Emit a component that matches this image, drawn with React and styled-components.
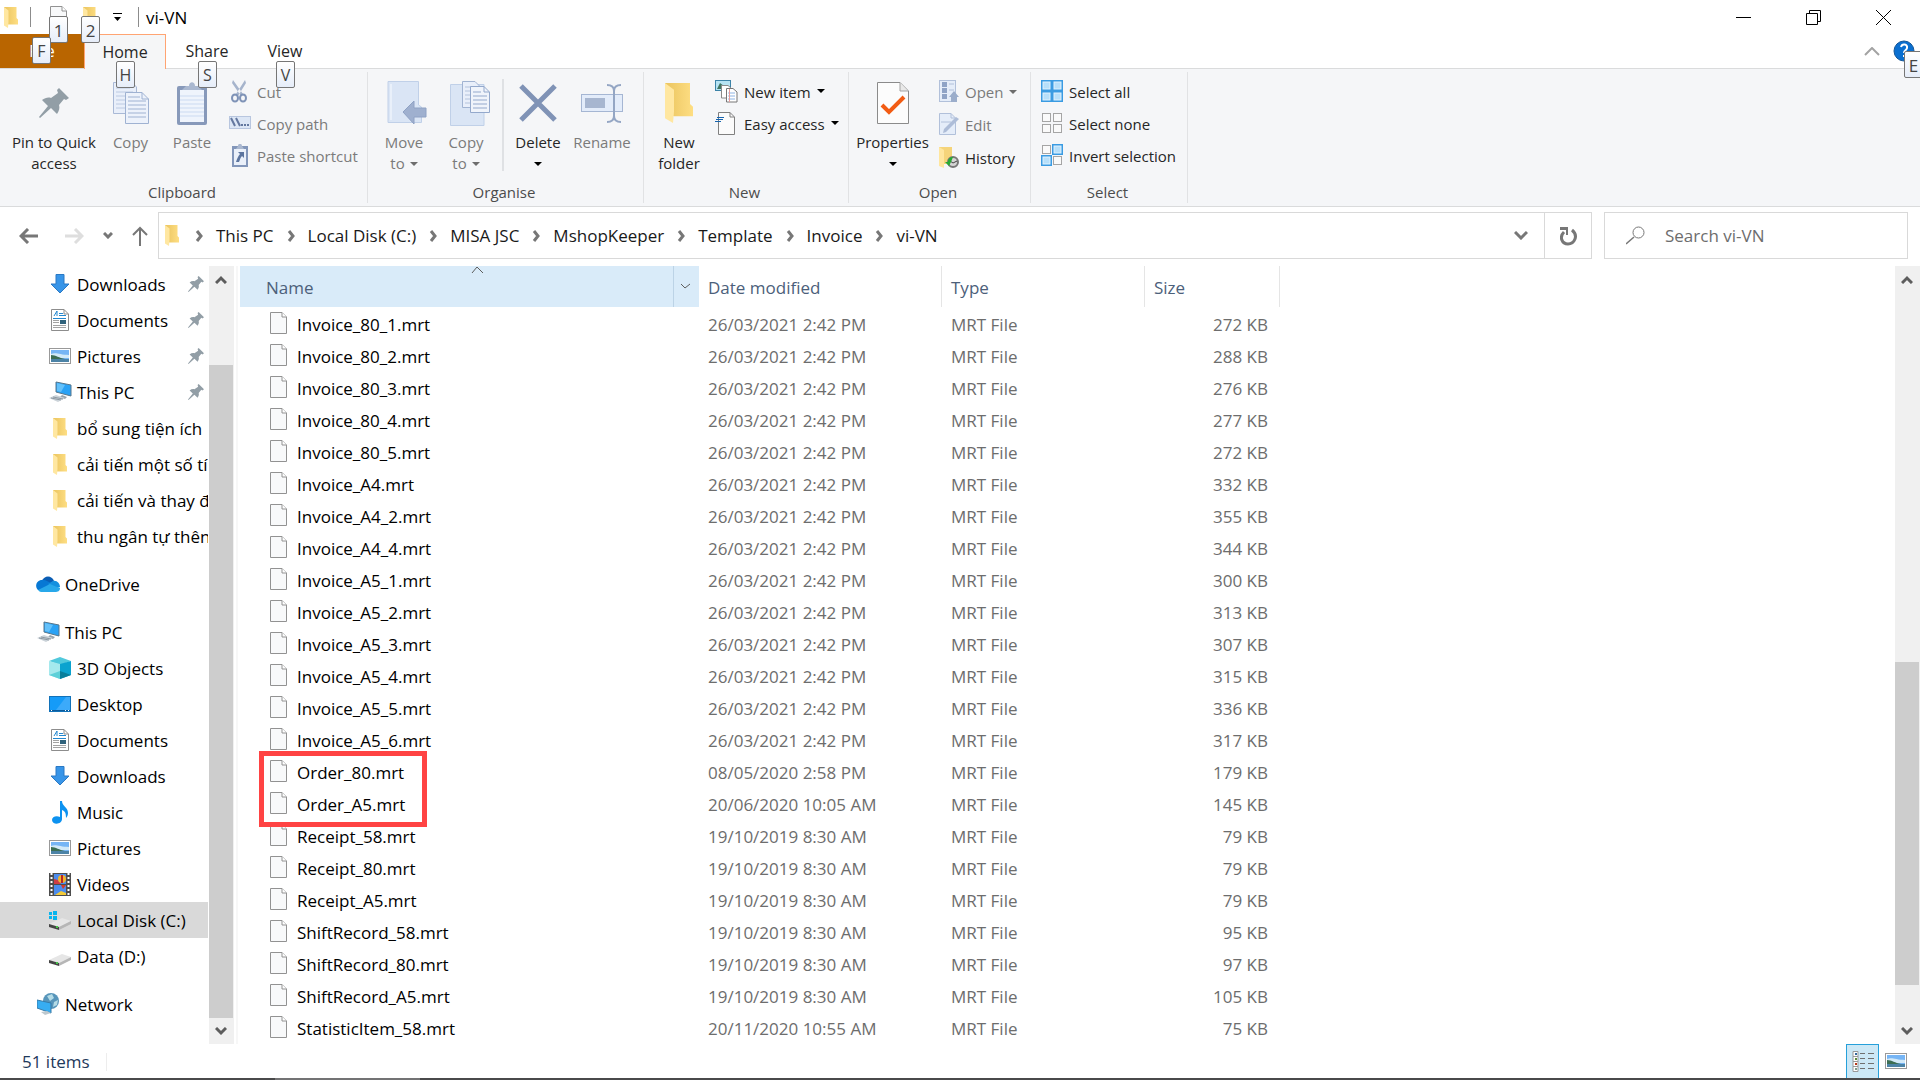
import React from "react";
import styled, { createGlobalStyle } from "styled-components";

const GlobalStyle = createGlobalStyle`
  * { box-sizing: border-box; }
  body {
    margin: 0;
    background: #fff;
    font-family: "Open Sans", "Noto Sans", sans-serif;
    font-size: 17px;
    line-height: 24px;
    color: #000;
  }
  button, input { font: inherit; color: inherit; }
  button { border: 0; padding: 0; background: none; }
  a { color: inherit; text-decoration: none; }
  svg { display: block; flex: none; }
`

const Window = styled.div`
  display: flex;
  flex-direction: column;
  min-height: 100vh;
  overflow: hidden;
`

const Label = styled.span`
  padding-top: 2px;
`

/* title bar */

const TitleBar = styled.header`
  display: flex;
  align-items: center;
  height: 34px;
  padding: 0 2px 0 4px;
`

const QuickButton = styled.button`
  position: relative;
  display: flex;
  justify-content: center;
  width: ${p => p.$width || 32}px;
`

const TitleLine = styled.span`
  width: 1px;
  height: 20px;
  margin: 0 ${p => p.$right}px 0 ${p => p.$left}px;
  background: #8c8c8c;
`

const Title = styled.h1`
  flex: 1;
  margin: 0;
  padding-top: 2px;
  font-size: 17px;
  font-weight: 400;
`

const WindowButton = styled.button`
  display: flex;
  align-items: center;
  justify-content: center;
  width: 70px;
  height: 34px;
`

const KeyTip = styled.span`
  position: absolute;
  z-index: 2;
  left: ${p => p.$left};
  top: ${p => p.$top}px;
  width: 19px;
  height: 27px;
  border: 1px solid #767676;
  border-radius: 2px;
  background: linear-gradient(#fff, #e6edf9);
  color: #444;
  line-height: 27px;
  text-align: center;
`

/* ribbon */

const Tabs = styled.nav`
  display: flex;
  height: 35px;
  border-bottom: 1px solid #dadbdc;
`

const Tab = styled.button`
  position: relative;
  width: ${p => p.$width}px;
  height: 34px;
  color: #262626;
  font-size: 16px;
`

const FileTab = styled(Tab)`
  background: #b96500;
  color: #fff;
`

const ActiveTab = styled(Tab)`
  height: 35px;
  border: 1px solid #ffa472;
  border-bottom: 0;
  background: #f5f6f7;
`

const TabTools = styled.div`
  display: flex;
  align-items: center;
  gap: 13px;
  margin-left: auto;
  padding-right: 5px;
`

const HelpButton = styled.button`
  position: relative;
`

const Ribbon = styled.section`
  display: flex;
  height: 138px;
  border-bottom: 1px solid #dadbdc;
  background: #f5f6f8;
  font-size: 15px;
  line-height: 21px;
`

const Group = styled.div`
  display: flex;
  flex-direction: column;
  width: ${p => p.$width}px;
  margin: 3px 0;
  border-right: 1px solid #e1e2e4;
`

const Tools = styled.div`
  display: flex;
  flex: 1;
  padding-left: ${p => p.$pad}px;
`

const GroupName = styled.div`
  padding-right: 3px;
  color: #4c4c4c;
  text-align: center;
`

const BigButton = styled.button`
  display: flex;
  flex-direction: column;
  align-items: center;
  width: ${p => p.$width}px;
  padding-top: 9px;
  color: ${p => p.disabled ? "#7b7b7b" : "#262626"};
  white-space: nowrap;

  & .picture {
    display: flex;
    align-items: center;
    height: 44px;
    margin-bottom: 7px;
  }
  & .line {
    display: flex;
    align-items: center;
    gap: 5px;
    height: 21px;
  }
`

const ToolLine = styled.span`
  width: 2px;
  height: 92px;
  margin: 7px 0 0 5px;
  background: #dfe1e4;
`

const SmallTools = styled.div`
  display: flex;
  flex-direction: column;
  margin-left: ${p => p.$left}px;
  padding-top: 3px;
`

const SmallButton = styled.button`
  display: flex;
  align-items: center;
  gap: 6px;
  height: ${p => p.$tall ? 33 : 32}px;
  color: ${p => p.disabled ? "#7b7b7b" : "#262626"};
  white-space: nowrap;
`

/* address row */

const AddressRow = styled.div`
  display: flex;
  align-items: center;
  height: 59px;
  padding: 0 12px 2px 19px;
`

const NavButtons = styled.div`
  display: flex;
  align-items: center;
  width: 139px;

  & button + button { margin-left: 19px; }
  & button:nth-child(2) { margin-left: 27px; }
`

const Address = styled.div`
  display: flex;
  align-items: center;
  flex: 1;
  height: 47px;
  border: 1px solid #d9d9d9;
`

const Crumbs = styled.nav`
  display: flex;
  align-items: center;
  flex: 1;
  padding-left: 6px;
  color: #191919;

  & > svg { margin-right: 3px; }
`

const Crumb = styled.a`
  display: flex;
  align-items: center;
  gap: 13px;
  margin-left: 13px;
`

const AddressButton = styled.button`
  display: flex;
  align-items: center;
  justify-content: center;
  width: 47px;
  height: 45px;
  border-left: ${p => p.$line ? "1px solid #d9d9d9" : "0"};
`

const Search = styled.label`
  display: flex;
  align-items: center;
  width: 304px;
  height: 47px;
  margin-left: 12px;
  padding-left: 21px;
  border: 1px solid #d9d9d9;

  & input {
    flex: 1;
    min-width: 0;
    padding: 0;
    margin-left: 20px;
    border: 0;
    outline: 0;
    background: none;
  }
  & input::placeholder { color: #6d6d6d; opacity: 1; }
`

/* body */

const Body = styled.main`
  display: flex;
  flex: 1;
`

const Side = styled.aside`
  width: 209px;
  padding-right: 1px;
`

const Place = styled.a`
  display: flex;
  align-items: center;
  gap: ${p => p.$root ? 5 : 6}px;
  height: 36px;
  margin-top: ${p => p.$root ? 12 : 0}px;
  padding-left: ${p => p.$root ? 36 : 49}px;
  background: ${p => p.$current ? "#d9d9d9" : "none"};
  white-space: nowrap;
  overflow: hidden;

  & .icon {
    display: flex;
    flex: none;
    justify-content: center;
    width: ${p => p.$root ? 24 : 22}px;
  }
  & .pin { margin-left: auto; margin-right: 4px; }
`

const ScrollTrack = styled.div`
  display: flex;
  flex-direction: column;
  flex: none;
  width: 25px;
  background: #f0f0f0;

  & button {
    display: flex;
    align-items: center;
    justify-content: center;
    height: 26px;
    padding-right: 1px;
  }
`

const Thumb = styled.div`
  flex: ${p => p.$size};
  width: 24px;
  background: #cdcdcd;
`

const Space = styled.div`
  flex: ${p => p.$size};
`

const Divider = styled.div`
  width: 2px;
  margin: 0 2px;
  background: #f7f7f7;
`

const Files = styled.div`
  flex: 1;
`

const FileTable = styled.table`
  width: 1040px;
  table-layout: fixed;
  border-collapse: separate;
  border-spacing: 0;

  & th {
    position: relative;
    height: 41px;
    padding: 3px 0 0 9px;
    border-right: 1px solid #e5e5e5;
    color: #4c607a;
    font-weight: 400;
    text-align: left;
  }
  & th:first-child {
    padding-left: 26px;
    border-right: 0;
    background: #d9ebf9;
  }
  & td {
    height: 32px;
    padding: 3px 0 0 9px;
    color: #6d6d6d;
    white-space: nowrap;
  }
  & td:first-child {
    position: relative;
    padding: 0 0 0 30px;
    color: #000;
  }
  & td:last-child {
    padding-right: 12px;
    text-align: right;
  }
`

const FileName = styled.a`
  display: flex;
  align-items: center;
  gap: 10px;
  height: 32px;

  & span { padding-top: 3px; }
`

const SortMark = styled.span`
  position: absolute;
  top: 0;
  left: 231px;
`

const FilterButton = styled.button`
  position: absolute;
  top: 0;
  right: 0;
  display: flex;
  align-items: center;
  justify-content: center;
  width: 26px;
  height: 41px;
  padding-right: 2px;
  border-left: 1px solid #bcd3e6;
`

const Highlight = styled.div`
  position: absolute;
  z-index: 1;
  top: -4px;
  left: 19px;
  width: 168px;
  height: 76px;
  border: 5px solid #ff4343;
  pointer-events: none;
`

const StatusBar = styled.footer`
  display: flex;
  align-items: center;
  height: 34px;
  padding: 0 8px 0 22px;
  color: #1e395b;

  & .count {
    margin-top: 2px;
    padding-right: 16px;
    border-right: 1px solid #ededed;
    line-height: 18px;
  }
`

const ViewButton = styled.button`
  display: flex;
  align-items: center;
  justify-content: center;
  width: 33px;
  height: 34px;
  border: ${p => p.$on ? "1px solid #26a0da" : "0"};
  border-bottom: 0;
  background: ${p => p.$on ? "#cce8f6" : "none"};

  &:first-of-type { margin-left: auto; }
`

const TaskEdge = styled.div`
  height: 2px;
  background: linear-gradient(90deg, #4a4a4b 0 275px, #737374 275px 420px, #4a4a4b 420px);
`

/* icons */

const Folder = ({ w = 14, h = 21 }) => (
  <svg width={w} height={h} viewBox="0 0 28 42" preserveAspectRatio="none">
    <defs>
      <linearGradient id="fold" x1="0" x2="1"><stop offset="0" stopColor="#eac45f" /><stop offset="1" stopColor="#fede83" /></linearGradient>
    </defs>
    <path d="M0 0H25V22L28 25V35H9L0 32z" fill="url(#fold)" />
    <path d="M0 0L9 7V30L8 42L0 37z" fill="#ffe7a1" />
  </svg>
)

const Page = () => (
  <svg width="17" height="22" viewBox="0 0 17 22">
    <path d="M.5.5H12L16.500 5V21.500H.5z" fill="#f8f9fa" stroke="#929292" />
    <path d="M12 .5V5H16.500" fill="#fff" stroke="#929292" />
  </svg>
)

const Caret = ({ color = "#000" }) => (
  <svg width="8" height="4" viewBox="0 0 8 4"><path d="M0 0H8L4 4z" fill={color} /></svg>
)

const Chevron = ({ d, w, h, color = "#5d5d5d", stroke = 3 }) => (
  <svg width={w} height={h} viewBox={`0 0 ${w} ${h}`}><path d={d} fill="none" stroke={color} strokeWidth={stroke} /></svg>
)

const Pin = ({ size = 16 }) => (
  <svg width={size} height={size} viewBox="0 0 30 30">
    <path d="M20 0L30 10L27 12L25 11L20 17C21 20 20 23 18 26L12 20L1 30L0 29L9 18L3 12C6 10 9 9 12 10L19 5L18 2z" fill="#929ea6" />
  </svg>
)

const Sheets = () => (
  <svg width="36" height="42" viewBox="0 0 36 42">
    <path d="M.5.5H19L23.500 5V31.500H.5z" fill="#e9effa" stroke="#a9b9d6" />
    <path d="M3 6H17M3 10H20M3 14H20M3 18H20M3 22H20M3 26H20" stroke="#bccae2" />
    <path d="M12.500 10.500H29L35.500 17V41.500H12.500z" fill="#edf2fb" stroke="#9fb2d2" />
    <path d="M29 10.500V17H35.500M15 15H27M15 19H33M15 23H33M15 27H33M15 31H33M15 35H33" fill="none" stroke="#9fb2d2" />
  </svg>
)

const Clipboard = () => (
  <svg width="30" height="43" viewBox="0 0 30 43">
    <rect y="4" width="30" height="39" rx="2" fill="#8799ba" />
    <rect x="3" y="8" width="24" height="32" fill="#eff4fc" />
    <path d="M3 14H27M3 18H27M3 22H27M3 26H27M3 30H27M3 34H27" stroke="#cbdaf1" />
    <path d="M5 8L9 4H12C12-1 18-1 18 4H21L25 8z" fill="#aab8d0" />
  </svg>
)

const Scissors = () => (
  <svg width="22" height="23" viewBox="0 0 22 23">
    <path d="M4 0L14 14L12 16L3 3zM16 0L7 14L9 16L17 3z" fill="#a6b4cc" />
    <ellipse cx="6" cy="18" rx="3" ry="3.500" fill="none" stroke="#7f93b7" strokeWidth="2" />
    <ellipse cx="14" cy="18" rx="3" ry="3.500" fill="none" stroke="#7f93b7" strokeWidth="2" />
  </svg>
)

const PathIcon = () => (
  <svg width="22" height="14" viewBox="0 0 22 14">
    <rect x=".5" y=".5" width="21" height="12" fill="#dce6f5" stroke="#b8c6df" />
    <path d="M2 2L6 10M7 2L11 10" stroke="#64789f" strokeWidth="2" />
    <path d="M12 9h2M15 9h2M18 9h2" stroke="#64789f" strokeWidth="2" />
  </svg>
)

const Shortcut = () => (
  <svg width="22" height="23" viewBox="0 0 22 23">
    <rect x="3" y="2" width="16" height="21" fill="#8296ba" />
    <rect x="5" y="5" width="12" height="16" fill="#eaf0fa" />
    <path d="M7 5L9 2C9-1 13-1 13 2L15 5z" fill="#aab8d0" />
    <path d="M9 8H15V14L13 12C11 14 11 16 10 18L7 18C8 15 9 12 11 10z" fill="#5c759f" />
  </svg>
)

const MoveTo = () => (
  <svg width="46" height="44" viewBox="-6 0 46 44">
    <path d="M1 .5H31.500V24L34.500 26V41.500H1z" fill="#dae5f5" stroke="#c0d0e8" />
    <path d="M4 3V39" stroke="#e9f0fa" strokeWidth="2" />
    <path d="M16 31L27 20V27H39V36H27V43z" fill="#9fb0cf" stroke="#8fa2c4" />
  </svg>
)

const CopyTo = () => (
  <svg width="47" height="45" viewBox="-7 0 47 45">
    <path d="M.5 3.500H34V44.500H.5z" fill="#dae5f5" stroke="#c0d0e8" />
    <path d="M12.500.5H25L30.500 6V26.500H12.500z" fill="#e9effa" stroke="#a2b4d2" />
    <path d="M15 6H24M15 10H27M15 14H27M15 18H27M15 22H27" stroke="#b4c3dc" />
    <path d="M20.500 5.500H34L39.500 11V31.500H20.500z" fill="#f0f4fb" stroke="#94a9cc" />
    <path d="M34 5.500V11H39M23 11H31M23 15H37M23 19H37M23 23H37M23 27H37" fill="none" stroke="#94a9cc" />
  </svg>
)

const DeleteIcon = () => (
  <svg width="38" height="38" viewBox="0 0 38 38"><path d="M2 2L36 36M36 2L2 36" stroke="#8093b6" strokeWidth="5" /></svg>
)

const RenameIcon = () => (
  <svg width="42" height="39" viewBox="0 0 42 39">
    <rect x=".5" y="10.500" width="41" height="17" fill="#e3ecfa" stroke="#a5b6d3" />
    <rect x="4" y="14" width="20" height="10" fill="#a7b6d0" />
    <path d="M26 1C31 1 33 3 33 7V32C33 36 31 38 26 38M40 1C35 1 33 3 33 7V32C33 36 35 38 40 38" fill="none" stroke="#94a6c4" strokeWidth="2" />
  </svg>
)

const NewItem = () => (
  <svg width="23" height="23" viewBox="0 0 23 23">
    <rect x=".5" y=".5" width="15" height="10" fill="#b6e3f3" stroke="#3c83a8" />
    <path d="M2 9L5 3L9 6L12 9z" fill="#3f7562" />
    <path d="M6.500 5.500H13L16 8V18H6.500z" fill="#fff" stroke="#8a8a8a" />
    <path d="M11.500 8.500H18L22 12V22H11.500z" fill="#fff" stroke="#777" />
    <path d="M13 13H20M13 16H20M13 19H20" stroke="#8eb4e4" />
    <path d="M14.500 9V22" stroke="#e79b9b" />
  </svg>
)

const EasyAccess = () => (
  <svg width="23" height="23" viewBox="0 0 23 23">
    <path d="M3.500.5H15L19.500 5V22.500H3.500z" fill="#fbfbfb" stroke="#808080" />
    <path d="M15 .5V5H19" fill="none" stroke="#808080" />
    <path d="M2 5.500H9M1 7.500H8M0 9.500H6" stroke="#1764ae" />
  </svg>
)

const PropsIcon = () => (
  <svg width="32" height="42" viewBox="0 0 32 42">
    <path d="M.5.5H23L31.500 9V41.500H.5z" fill="#fcfcfc" stroke="#8b8b8b" />
    <path d="M23 .5V9H31" fill="#e9e9e9" stroke="#a3a3a3" />
    <path d="M5 23L12 30L27 15" fill="none" stroke="#f25c14" strokeWidth="4" />
  </svg>
)

const OpenIcon = () => (
  <svg width="20" height="23" viewBox="0 0 20 23">
    <rect x=".5" y=".5" width="16" height="21" fill="#e5edf9" stroke="#b1c0da" />
    <path d="M3 2h5v5h-5zM3 8h5v5h-5zM3 14h5v5h-5z" fill="#8fa3c6" />
    <path d="M10 4H15M10 10H15" stroke="#b1c0da" />
    <path d="M15 11L20 17H18V22H12V17H10z" fill="#9badcb" />
  </svg>
)

const EditIcon = () => (
  <svg width="20" height="23" viewBox="0 0 20 23">
    <path d="M.5.5H12L16.500 5V21.500H.5z" fill="#e5edf9" stroke="#b1c0da" />
    <path d="M12 .5V5H16M2 9H12" fill="none" stroke="#b1c0da" />
    <path d="M4 20L5 16L17 4L20 6L7 19z" fill="#aebdd8" />
  </svg>
)

const HistoryIcon = () => (
  <svg width="20" height="23" viewBox="0 0 20 23">
    <path d="M0 1H13V12L14 18H0z" fill="#f5d47a" />
    <path d="M0 1L5 4V22L0 20z" fill="#ffe69e" />
    <circle cx="14" cy="16" r="5" fill="#d5d5d5" stroke="#777" strokeWidth="2" />
    <path d="M11 15l3 2l4-2" fill="none" stroke="#444" />
    <path d="M14 11C11 11 9 13 9 16H6L10 20L12 16" fill="#28a935" />
  </svg>
)

/* four squares, each one either picked or plain */
const Squares = ({ on }) => (
  <svg width="22" height="22" viewBox="0 0 22 22">
    {[[0, 0], [11, 0], [0, 11], [11, 11]].map(([x, y], i) => on[i] ? (
      <g key={i}>
        <rect x={x + 1} y={y + 1} width="9" height="9" fill="#b6dffa" stroke="#3a9be2" strokeWidth="2" />
        <rect x={x + 2} y={y + 2} width="7" height="7" fill="none" stroke="#dff1fd" strokeWidth="1" />
      </g>
    ) : (
      <rect key={i} x={x + 1.5} y={y + 1.5} width="8" height="8" fill="#fafafa" stroke="#a5a5a5" />
    ))}
  </svg>
)

const Down = () => (
  <svg width="20" height="20" viewBox="0 0 20 20"><path d="M6 .5H14V10H19L10 19L1 10H6z" fill="#3895e8" stroke="#2a79c4" /></svg>
)

const Doc = () => (
  <svg width="18" height="22" viewBox="0 0 18 22">
    <path d="M.5.5H13L17.500 5V21.500H.5z" fill="#fff" stroke="#8d8d8d" />
    <path d="M13 .5V5H17" fill="none" stroke="#8d8d8d" />
    <path d="M3 7L6 2V7M8 4.500H12M8 6.500H15M2 9.500H15" fill="none" stroke="#2287cf" />
    <path d="M2 11.500H8M2 13.500H8M2 16.500H15M2 18.500H15" stroke="#a3a3a3" />
    <rect x="9" y="11" width="6" height="4" fill="#31637c" />
  </svg>
)

const Photo = () => (
  <svg width="22" height="16" viewBox="0 0 22 16">
    <rect x=".5" y=".5" width="21" height="15" fill="#fff" stroke="#999" />
    <rect x="2" y="2" width="18" height="12" fill="#76b5f5" />
    <path d="M2 6C7 4 11 7 20 7V10H2z" fill="#d2e9f8" />
    <path d="M2 7C7 7 10 10 16 11H2z" fill="#3c6e54" />
    <path d="M2 11H20V14H2z" fill="#4c83a6" />
  </svg>
)

const Computer = () => (
  <svg width="23" height="22" viewBox="0 0 23 22">
    <path d="M7 1L22 4V15L7 11z" fill="#2aa2f5" stroke="#58778b" />
    <path d="M8 2L16 4L12 11L8 10z" fill="#64c1fa" />
    <path d="M13 14L18 16L16 18L10 17z" fill="#98a3aa" />
    <path d="M0 17L7 14L16 17L9 21z" fill="#cbd3d9" />
    <path d="M2 17L12 19M4 16L14 18" stroke="#8e9aa3" />
  </svg>
)

const Cloud = () => (
  <svg width="24" height="16" viewBox="0 0 24 16">
    <path d="M6 5C8-1 16-1 18 5L12 9z" fill="#0a5db4" />
    <path d="M2 14C-2 10 1 4 6 4C9 3 12 6 17 8L10 14z" fill="#0778d4" />
    <path d="M17 5C21 4 24 8 24 11L18 13L12 8z" fill="#1490df" />
    <path d="M2 14L14 8C18 10 22 11 24 12C24 15 22 16 19 16H5C4 16 3 15 2 14z" fill="#28a8ea" />
  </svg>
)

const Cube = () => (
  <svg width="22" height="22" viewBox="0 0 22 22">
    <path d="M0 4L11 0L22 4L11 8z" fill="#51c9dc" />
    <path d="M0 4L11 7V22L0 18z" fill="#a5e9ed" />
    <path d="M11 7L22 4V18L11 22z" fill="#0ba3cf" />
    <path d="M0 18L11 14V22z" fill="#5ed0d8" />
    <path d="M11 14L22 18L11 22z" fill="#087e9b" />
  </svg>
)

const DesktopIcon = () => (
  <svg width="22" height="16" viewBox="0 0 22 16">
    <rect x=".5" y=".5" width="21" height="15" fill="#159bf8" stroke="#1272b9" />
    <path d="M7 14L17 1H21V14z" fill="#3caafa" />
    <path d="M1 14.500H21" stroke="#0b5b9c" />
    <path d="M2 14.500h1M16 14.500h1M19 14.500h1" stroke="#fff" />
  </svg>
)

const Note = () => (
  <svg width="17" height="23" viewBox="0 0 17 23">
    <path d="M8 0H10C10 5 16 6 16 12C16 14 15 16 14 17C14 12 13 10 10 9V18C10 24 0 24 0 19C0 16 4 14 8 16z" fill="#0d92f0" />
  </svg>
)

const Film = () => (
  <svg width="22" height="23" viewBox="0 0 22 23">
    <rect width="22" height="23" fill="#4d4d4d" />
    <path d="M2.500 0V23M19.500 0V23" stroke="#fff" strokeWidth="2" strokeDasharray="2 2" />
    <path d="M5 1H17V11H5zM5 12H17V22H5z" fill="#4c8ced" />
    <path d="M5 6L9 7L12 11H5z" fill="#cf3d44" />
    <circle cx="13" cy="6" r="4" fill="#f3b32a" />
    <path d="M13 2V10" stroke="#b72626" strokeWidth="2" />
    <path d="M12 12H17L14 16z" fill="#d43a27" />
    <path d="M6 22L12 18L17 20V22z" fill="#f3ca38" />
  </svg>
)

const Drive = ({ system }) => (
  <svg width="22" height="20" viewBox="0 0 22 20">
    <path d="M0 14L13 8L22 11L10 17z" fill="#e6e6e6" />
    <path d="M0 14L10 17V20L0 17z" fill="#454545" />
    <path d="M10 17L22 11V14L10 20z" fill="#b6b6b6" />
    <path d="M7 17h2" stroke="#47c34b" strokeWidth="2" />
    {system && <path d="M0 2H3V5H0zM4 1H8V5H4zM0 6H3V9H0zM4 6H8V10H4z" fill="#08b5ee" />}
  </svg>
)

const NetworkIcon = () => (
  <svg width="22" height="22" viewBox="0 0 22 22">
    <circle cx="14" cy="8" r="8" fill="#5795ba" />
    <path d="M10 3L15 1L17 5L13 8zM17 9L21 7L20 12L16 14z" fill="#b4dbe6" />
    <path d="M0 7L14 10V20L0 15z" fill="#37adf2" stroke="#367ba8" />
    <path d="M4 19L10 18L14 20L8 22z" fill="#bdc8ce" />
  </svg>
)

const DetailsIcon = () => (
  <svg width="22" height="22" viewBox="0 0 22 22">
    <path d="M1 .5h5v5h-5zM1 5.500h5v5h-5zM1 10.500h5v5h-5zM1 15.500h5v5h-5z" fill="#fff" stroke="#999" />
    <path d="M3 3h2" stroke="#34689d" strokeWidth="2" />
    <path d="M3 8h2" stroke="#5f8c3c" strokeWidth="2" />
    <path d="M3 13h2" stroke="#b53719" strokeWidth="2" />
    <path d="M3 18h2" stroke="#7c9c8c" strokeWidth="2" />
    <path d="M8 2.500h5M16 2.500h6M8 7.500h5M16 7.500h6M8 12.500h5M16 12.500h6M8 17.500h5M16 17.500h6" stroke="#707070" />
  </svg>
)

/* data */

const pinned = [
  ["Downloads", Down], ["Documents", Doc], ["Pictures", Photo], ["This PC", Computer],
]
const recent = ["bổ sung tiện ích", "cải tiến một số tí", "cải tiến và thay đ", "thu ngân tự thên"]
const computer = [
  ["3D Objects", Cube], ["Desktop", DesktopIcon], ["Documents", Doc], ["Downloads", Down],
  ["Music", Note], ["Pictures", Photo], ["Videos", Film],
]
const crumbs = ["This PC", "Local Disk (C:)", "MISA JSC", "MshopKeeper", "Template", "Invoice", "vi-VN"]

const march = "26/03/2021 2:42 PM"
const october = "19/10/2019 8:30 AM"
const files = [
  ["Invoice_80_1.mrt", march, 272],
  ["Invoice_80_2.mrt", march, 288],
  ["Invoice_80_3.mrt", march, 276],
  ["Invoice_80_4.mrt", march, 277],
  ["Invoice_80_5.mrt", march, 272],
  ["Invoice_A4.mrt", march, 332],
  ["Invoice_A4_2.mrt", march, 355],
  ["Invoice_A4_4.mrt", march, 344],
  ["Invoice_A5_1.mrt", march, 300],
  ["Invoice_A5_2.mrt", march, 313],
  ["Invoice_A5_3.mrt", march, 307],
  ["Invoice_A5_4.mrt", march, 315],
  ["Invoice_A5_5.mrt", march, 336],
  ["Invoice_A5_6.mrt", march, 317],
  ["Order_80.mrt", "08/05/2020 2:58 PM", 179],
  ["Order_A5.mrt", "20/06/2020 10:05 AM", 145],
  ["Receipt_58.mrt", october, 79],
  ["Receipt_80.mrt", october, 79],
  ["Receipt_A5.mrt", october, 79],
  ["ShiftRecord_58.mrt", october, 95],
  ["ShiftRecord_80.mrt", october, 97],
  ["ShiftRecord_A5.mrt", october, 105],
  ["StatisticItem_58.mrt", "20/11/2020 10:55 AM", 75],
]

const Big = ({ icon, lines, width, disabled, caret }) => (
  <BigButton $width={width} disabled={disabled}>
    <span className="picture">{icon}</span>
    {lines.map((line, i) => (
      <span className="line" key={i}>
        {line}
        {caret && i === lines.length - 1 && <Caret color={disabled ? "#6d6d6d" : "#000"} />}
      </span>
    ))}
  </BigButton>
)

const Small = ({ icon, children, disabled, caret, tall }) => (
  <SmallButton disabled={disabled} $tall={tall}>
    {icon}
    <Label>{children}</Label>
    {caret && <Caret color={disabled ? "#6d6d6d" : "#000"} />}
  </SmallButton>
)

const PlaceLink = ({ icon: Icon, name, root, pin, current, ...rest }) => (
  <Place href="#" $root={root} $current={current}>
    <span className="icon"><Icon {...rest} /></span>
    <Label>{name}</Label>
    {pin && <span className="pin"><Pin /></span>}
  </Place>
)

const Scroll = ({ before, size, after }) => (
  <ScrollTrack>
    <button aria-label="Scroll up"><Chevron w={12} h={9} d="M1 8L6 3L11 8" /></button>
    <Space $size={before} />
    <Thumb $size={size} />
    <Space $size={after} />
    <button aria-label="Scroll down"><Chevron w={12} h={9} d="M1 1L6 6L11 1" /></button>
  </ScrollTrack>
)

const TopBar = () => (
  <TitleBar>
    <Folder />
    <TitleLine $left={12} $right={11} />
    <QuickButton aria-label="Properties">
      <Page />
      <KeyTip $left="7px" $top={10}>1</KeyTip>
    </QuickButton>
    <QuickButton aria-label="New folder">
      <Folder />
      <KeyTip $left="7px" $top={9}>2</KeyTip>
    </QuickButton>
    <QuickButton aria-label="Customise Quick Access Toolbar" $width={22}>
      <svg width="9" height="8" viewBox="0 0 9 8"><path d="M0 0H9V1H0zM1 4H8L4.500 8z" /></svg>
    </QuickButton>
    <TitleLine $left={10} $right={7} />
    <Title>vi-VN</Title>
    <WindowButton aria-label="Minimise"><svg width="15" height="15"><path d="M0 7.500H15" stroke="#000" /></svg></WindowButton>
    <WindowButton aria-label="Restore">
      <svg width="15" height="15"><path d="M.5 3.500H11.500V14.500H.5zM3.500 3V.5H14.500V11.500H12" fill="none" stroke="#000" /></svg>
    </WindowButton>
    <WindowButton aria-label="Close"><svg width="15" height="15"><path d="M0 0L15 15M15 0L0 15" stroke="#000" /></svg></WindowButton>
  </TitleBar>
)

const RibbonTabs = () => (
  <Tabs>
    <FileTab $width={84}>File<KeyTip $left="32px" $top={3}>F</KeyTip></FileTab>
    <ActiveTab $width={82}>Home<KeyTip $left="31px" $top={26}>H</KeyTip></ActiveTab>
    <Tab $width={82}>Share<KeyTip $left="32px" $top={27}>S</KeyTip></Tab>
    <Tab $width={74}>View<KeyTip $left="28px" $top={27}>V</KeyTip></Tab>
    <TabTools>
      <button aria-label="Minimise the Ribbon"><Chevron w={16} h={9} d="M1 8L8 1L15 8" color="#a3a3a3" stroke={2} /></button>
      <HelpButton aria-label="Help">
        <svg width="22" height="22" viewBox="0 0 22 22">
          <circle cx="11" cy="11" r="10" fill="#0a6fd0" stroke="#155798" />
          <path d="M8 7C9 3 15 4 14 8C14 10 11 10 11 13M11 15V17" fill="none" stroke="#fff" strokeWidth="2" />
        </svg>
        <KeyTip $left="11px" $top={11}>E</KeyTip>
      </HelpButton>
    </TabTools>
  </Tabs>
)

const RibbonTools = () => (
  <Ribbon>
    <Group $width={368}>
      <Tools $pad={8}>
        <Big width={92} lines={["Pin to Quick", "access"]} icon={<Pin size={30} />} />
        <Big width={61} lines={["Copy"]} icon={<Sheets />} disabled />
        <Big width={62} lines={["Paste"]} icon={<Clipboard />} disabled />
        <SmallTools $left={6}>
          <Small icon={<Scissors />} disabled>Cut</Small>
          <Small icon={<PathIcon />} disabled>Copy path</Small>
          <Small icon={<Shortcut />} disabled>Paste shortcut</Small>
        </SmallTools>
      </Tools>
      <GroupName>Clipboard</GroupName>
    </Group>
    <Group $width={276}>
      <Tools $pad={5}>
        <Big width={62} lines={["Move", "to"]} icon={<MoveTo />} disabled caret />
        <Big width={62} lines={["Copy", "to"]} icon={<CopyTo />} disabled caret />
        <ToolLine />
        <Big width={68} lines={["Delete", ""]} icon={<DeleteIcon />} caret />
        <Big width={60} lines={["Rename"]} icon={<RenameIcon />} disabled />
      </Tools>
      <GroupName>Organise</GroupName>
    </Group>
    <Group $width={205}>
      <Tools $pad={4}>
        <Big width={62} lines={["New", "folder"]} icon={<Folder w={28} h={40} />} />
        <SmallTools $left={5}>
          <Small icon={<NewItem />} caret>New item</Small>
          <Small icon={<EasyAccess />} caret>Easy access</Small>
        </SmallTools>
      </Tools>
      <GroupName>New</GroupName>
    </Group>
    <Group $width={182}>
      <Tools $pad={6}>
        <Big width={75} lines={["Properties", ""]} icon={<PropsIcon />} caret />
        <SmallTools $left={9}>
          <Small icon={<OpenIcon />} disabled caret tall>Open</Small>
          <Small icon={<EditIcon />} disabled tall>Edit</Small>
          <Small icon={<HistoryIcon />} tall>History</Small>
        </SmallTools>
      </Tools>
      <GroupName>Open</GroupName>
    </Group>
    <Group $width={157}>
      <Tools $pad={10}>
        <SmallTools $left={0}>
          <Small icon={<Squares on={[1, 1, 1, 1]} />}>Select all</Small>
          <Small icon={<Squares on={[0, 0, 0, 0]} />}>Select none</Small>
          <Small icon={<Squares on={[0, 1, 1, 0]} />}>Invert selection</Small>
        </SmallTools>
      </Tools>
      <GroupName>Select</GroupName>
    </Group>
  </Ribbon>
)

const AddressBar = () => (
  <AddressRow>
    <NavButtons>
      <button aria-label="Back"><Chevron w={19} h={16} d="M19 8H2M9 1L2 8L9 15" color="#777" /></button>
      <button aria-label="Forward"><Chevron w={19} h={16} d="M0 8H17M10 1L17 8L10 15" color="#dedede" /></button>
      <button aria-label="Recent locations"><Chevron w={10} h={7} d="M1 1L5 5L9 1" color="#777" /></button>
      <button aria-label="Up"><Chevron w={16} h={20} d="M8 20V2M1 9L8 2L15 9" color="#777" stroke={2} /></button>
    </NavButtons>
    <Address>
      <Crumbs>
        <Folder />
        {crumbs.map(name => (
          <Crumb href="#" key={name}>
            <Chevron w={8} h={12} d="M2 1L6 6L2 11" color="#777" />
            {name}
          </Crumb>
        ))}
      </Crumbs>
      <AddressButton aria-label="Previous locations"><Chevron w={14} h={9} d="M1 1L7 7L13 1" color="#777" /></AddressButton>
      <AddressButton aria-label="Refresh" $line>
        <svg width="17" height="20" viewBox="0 0 17 20">
          <path d="M12 4C19 10 14 18 8 18C2 18-1 11 4 6" fill="none" stroke="#777" strokeWidth="3" />
          <path d="M0 1H8V9H6V4H0z" fill="#777" />
        </svg>
      </AddressButton>
    </Address>
    <Search>
      <svg width="19" height="19" viewBox="0 0 19 19"><circle cx="12.500" cy="6.500" r="5.500" fill="none" stroke="#777" /><path d="M8 11L0 18" stroke="#777" strokeWidth="1.500" /></svg>
      <input type="text" placeholder="Search vi-VN" aria-label="Search vi-VN" />
    </Search>
  </AddressRow>
)

const Places = () => (
  <Side>
    {pinned.map(([name, icon]) => <PlaceLink key={name} name={name} icon={icon} pin />)}
    {recent.map(name => <PlaceLink key={name} name={name} icon={Folder} />)}
    <PlaceLink name="OneDrive" icon={Cloud} root />
    <PlaceLink name="This PC" icon={Computer} root />
    {computer.map(([name, icon]) => <PlaceLink key={name} name={name} icon={icon} />)}
    <PlaceLink name="Local Disk (C:)" icon={Drive} system current />
    <PlaceLink name="Data (D:)" icon={Drive} />
    <PlaceLink name="Network" icon={NetworkIcon} root />
  </Side>
)

const FileList = () => (
  <Files>
    <FileTable>
      <colgroup>
        <col width="459" />
        <col width="243" />
        <col width="203" />
        <col width="135" />
      </colgroup>
      <thead>
        <tr>
          <th>
            Name
            <SortMark><Chevron w={13} h={8} d="M1 7L6 1L12 7" stroke={1} /></SortMark>
            <FilterButton aria-label="Filter by name"><Chevron w={11} h={7} d="M1 1L5 5L10 1" stroke={1} /></FilterButton>
          </th>
          <th>Date modified</th>
          <th>Type</th>
          <th>Size</th>
        </tr>
      </thead>
      <tbody>
        {files.map(([name, date, size]) => (
          <tr key={name}>
            <td>
              <FileName href="#"><Page /><span>{name}</span></FileName>
              {name === "Order_80.mrt" && <Highlight />}
            </td>
            <td>{date}</td>
            <td>MRT File</td>
            <td>{size} KB</td>
          </tr>
        ))}
      </tbody>
    </FileTable>
  </Files>
)

const App = () => (
  <>
    <GlobalStyle />
    <Window>
      <TopBar />
      <RibbonTabs />
      <RibbonTools />
      <AddressBar />
      <Body>
        <Places />
        <Scroll before={73} size={653} after={0} />
        <Divider />
        <FileList />
        <Scroll before={370} size={323} after={33} />
      </Body>
      <StatusBar>
        <span className="count">51 items</span>
        <ViewButton aria-label="Details" $on><DetailsIcon /></ViewButton>
        <ViewButton aria-label="Large icons"><Photo /></ViewButton>
      </StatusBar>
      <TaskEdge />
    </Window>
  </>
)

export default App;
